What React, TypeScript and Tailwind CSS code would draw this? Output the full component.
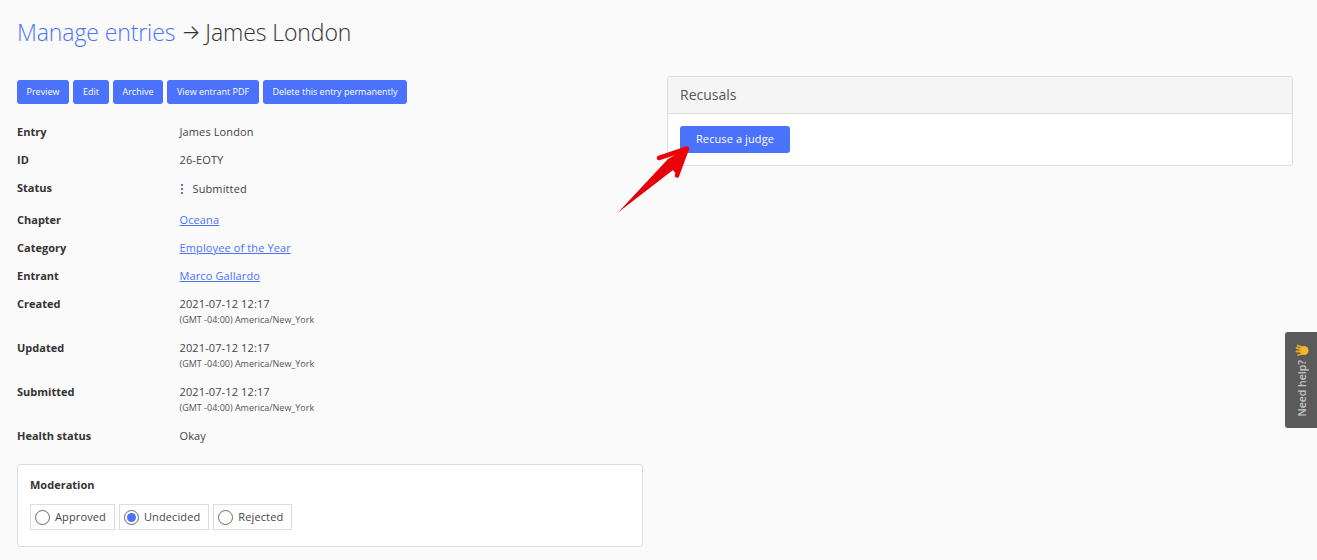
const FONT = "font-['Open_Sans',sans-serif]";

const actions = [
  { label: 'Preview', width: 'w-[52px]' },
  { label: 'Edit', width: 'w-[36px]' },
  { label: 'Archive', width: 'w-[50px]' },
  { label: 'View entrant PDF', width: 'w-[92px]' },
  { label: 'Delete this entry permanently', width: 'w-[144px]' },
];

const TZ = '(GMT -04:00) America/New_York';

function Row({ label, className, children }: { label: string; className: string; children: React.ReactNode }) {
  return (
    <div className={`flex ${className}`}>
      <div className="w-[162.5px] shrink-0 font-bold text-[#333]">{label}</div>
      <div className="min-w-0 tracking-[0.12px]">{children}</div>
    </div>
  );
}

function Stamp() {
  return (
    <>
      <div>2021-07-12 12:17</div>
      <div className="mt-[1px] text-[9px] leading-[14px] tracking-normal text-[#555]">{TZ}</div>
    </>
  );
}

function TextLink({ children }: { children: React.ReactNode }) {
  return <a className="text-[#4a72fb] underline">{children}</a>;
}

function Radio({ label, checked }: { label: string; checked?: boolean }) {
  return (
    <label className="flex h-[26px] items-center border border-[#ddd] pl-[4px] pr-[8px] tracking-[0.12px]">
      <span className="mr-[5px] flex h-[15px] w-[15px] items-center justify-center rounded-full border border-[#666] bg-white">
        {checked && <span className="h-[9px] w-[9px] rounded-full bg-[#4a72fb]" />}
      </span>
      {label}
    </label>
  );
}

export default function App() {
  return (
    <div className={`relative h-[560px] w-[1317px] overflow-hidden bg-[#fafafa] text-[11px] leading-[16px] text-[#444] ${FONT}`}>
      <h1 className="flex items-center px-[17px] pt-[15px] text-[23px] font-light leading-[34px] tracking-[-0.1px] text-[#333]">
        <a className="text-[#4a72fb]">Manage entries</a>
        <span className="ml-[6px] mr-[5px] font-['Inter',sans-serif] text-[20px] font-light">→</span>
        James London
      </h1>

      <div className="flex gap-[24px] pl-[17px] pr-[24px] pt-[31px]">
        <div className="w-[626px]">
          <div className="flex gap-[4px]">
            {actions.map((action) => (
              <button
                key={action.label}
                className={`h-[24px] rounded-[3px] bg-[#4a72fb] text-[9px] font-medium text-white ${action.width}`}
              >
                {action.label}
              </button>
            ))}
          </div>

          <div className="mt-[20px]">
            <Row label="Entry" className="h-[28px]">James London</Row>
            <Row label="ID" className="h-[28px]">26-EOTY</Row>
            <Row label="Status" className="h-[32px]">
              <div className="flex items-center pt-[1px]">
                <span className="ml-[1px] mr-[10px] flex flex-col gap-[2px]">
                  <span className="h-[2px] w-[2px] bg-[#4a72fb]" />
                  <span className="h-[2px] w-[2px] bg-[#4a72fb]" />
                  <span className="h-[2px] w-[2px] bg-[#4a72fb]" />
                </span>
                Submitted
              </div>
            </Row>
            <Row label="Chapter" className="h-[28px]"><TextLink>Oceana</TextLink></Row>
            <Row label="Category" className="h-[28px]"><TextLink>Employee of the Year</TextLink></Row>
            <Row label="Entrant" className="h-[28px]"><TextLink>Marco Gallardo</TextLink></Row>
            <Row label="Created" className="h-[44px]"><Stamp /></Row>
            <Row label="Updated" className="h-[44px]"><Stamp /></Row>
            <Row label="Submitted" className="h-[44px]"><Stamp /></Row>
            <Row label="Health status" className="h-[28px]">Okay</Row>
          </div>

          <div className="mt-[8px] h-[83px] rounded-[3px] border border-[#ddd] bg-white px-[12px] pt-[12px]">
            <div className="font-bold text-[#333]">Moderation</div>
            <div className="mt-[11px] flex gap-[4px]">
              <Radio label="Approved" />
              <Radio label="Undecided" checked />
              <Radio label="Rejected" />
            </div>
          </div>
        </div>

        <div className="mt-[-4px] h-[90px] w-[626px] rounded-[3px] border border-[#ddd] bg-white">
          <div className="h-[37px] border-b border-[#ddd] bg-[#f5f5f5] px-[12px] text-[14px] leading-[36px] text-[#555]">
            Recusals
          </div>
          <div className="px-[12px] pt-[12px]">
            <button className="h-[27px] w-[110px] rounded-[3px] bg-[#4a72fb] pb-[2px] text-[11px] font-medium tracking-[0.1px] text-white">
              Recuse a judge
            </button>
          </div>
        </div>
      </div>

      {/* annotation arrow */}
      <svg className="absolute left-[610px] top-[140px]" width="90" height="80" viewBox="610 140 90 80">
        <path d="M618 212.5 L668 159 L687 148 L677 175 L673 170 Z" fill="#e6000a" />
        <path d="M659 158 L687 148.5 L677 175.5" fill="none" stroke="#ee0008" strokeWidth="4.5" strokeLinecap="round" strokeLinejoin="round" />
        <path d="M668 160 L686 150 L674 171 Z" fill="#ee0008" />
      </svg>

      {/* help tab */}
      <div className="absolute right-0 top-[332px] flex h-[96px] w-[32px] flex-col items-center rounded-l-[3px] bg-[#5a5a5a] pl-[2px] pt-[12px]">
        <svg width="14" height="13" viewBox="0 0 14 13">
          <circle cx="9" cy="6.5" r="4.5" fill="#f5b82e" />
          <path d="M7 3 L2.5 1.5 M6 5 L1.5 4 M6 7.5 L1.5 7.5 M7 10 L3 11" stroke="#e9a820" strokeWidth="1.8" strokeLinecap="round" />
        </svg>
        <span className="mt-[3px] rotate-180 text-[10.5px] font-semibold leading-[16px] text-[#c4c4c4] [writing-mode:vertical-rl]">
          Need help?
        </span>
      </div>
    </div>
  );
}
